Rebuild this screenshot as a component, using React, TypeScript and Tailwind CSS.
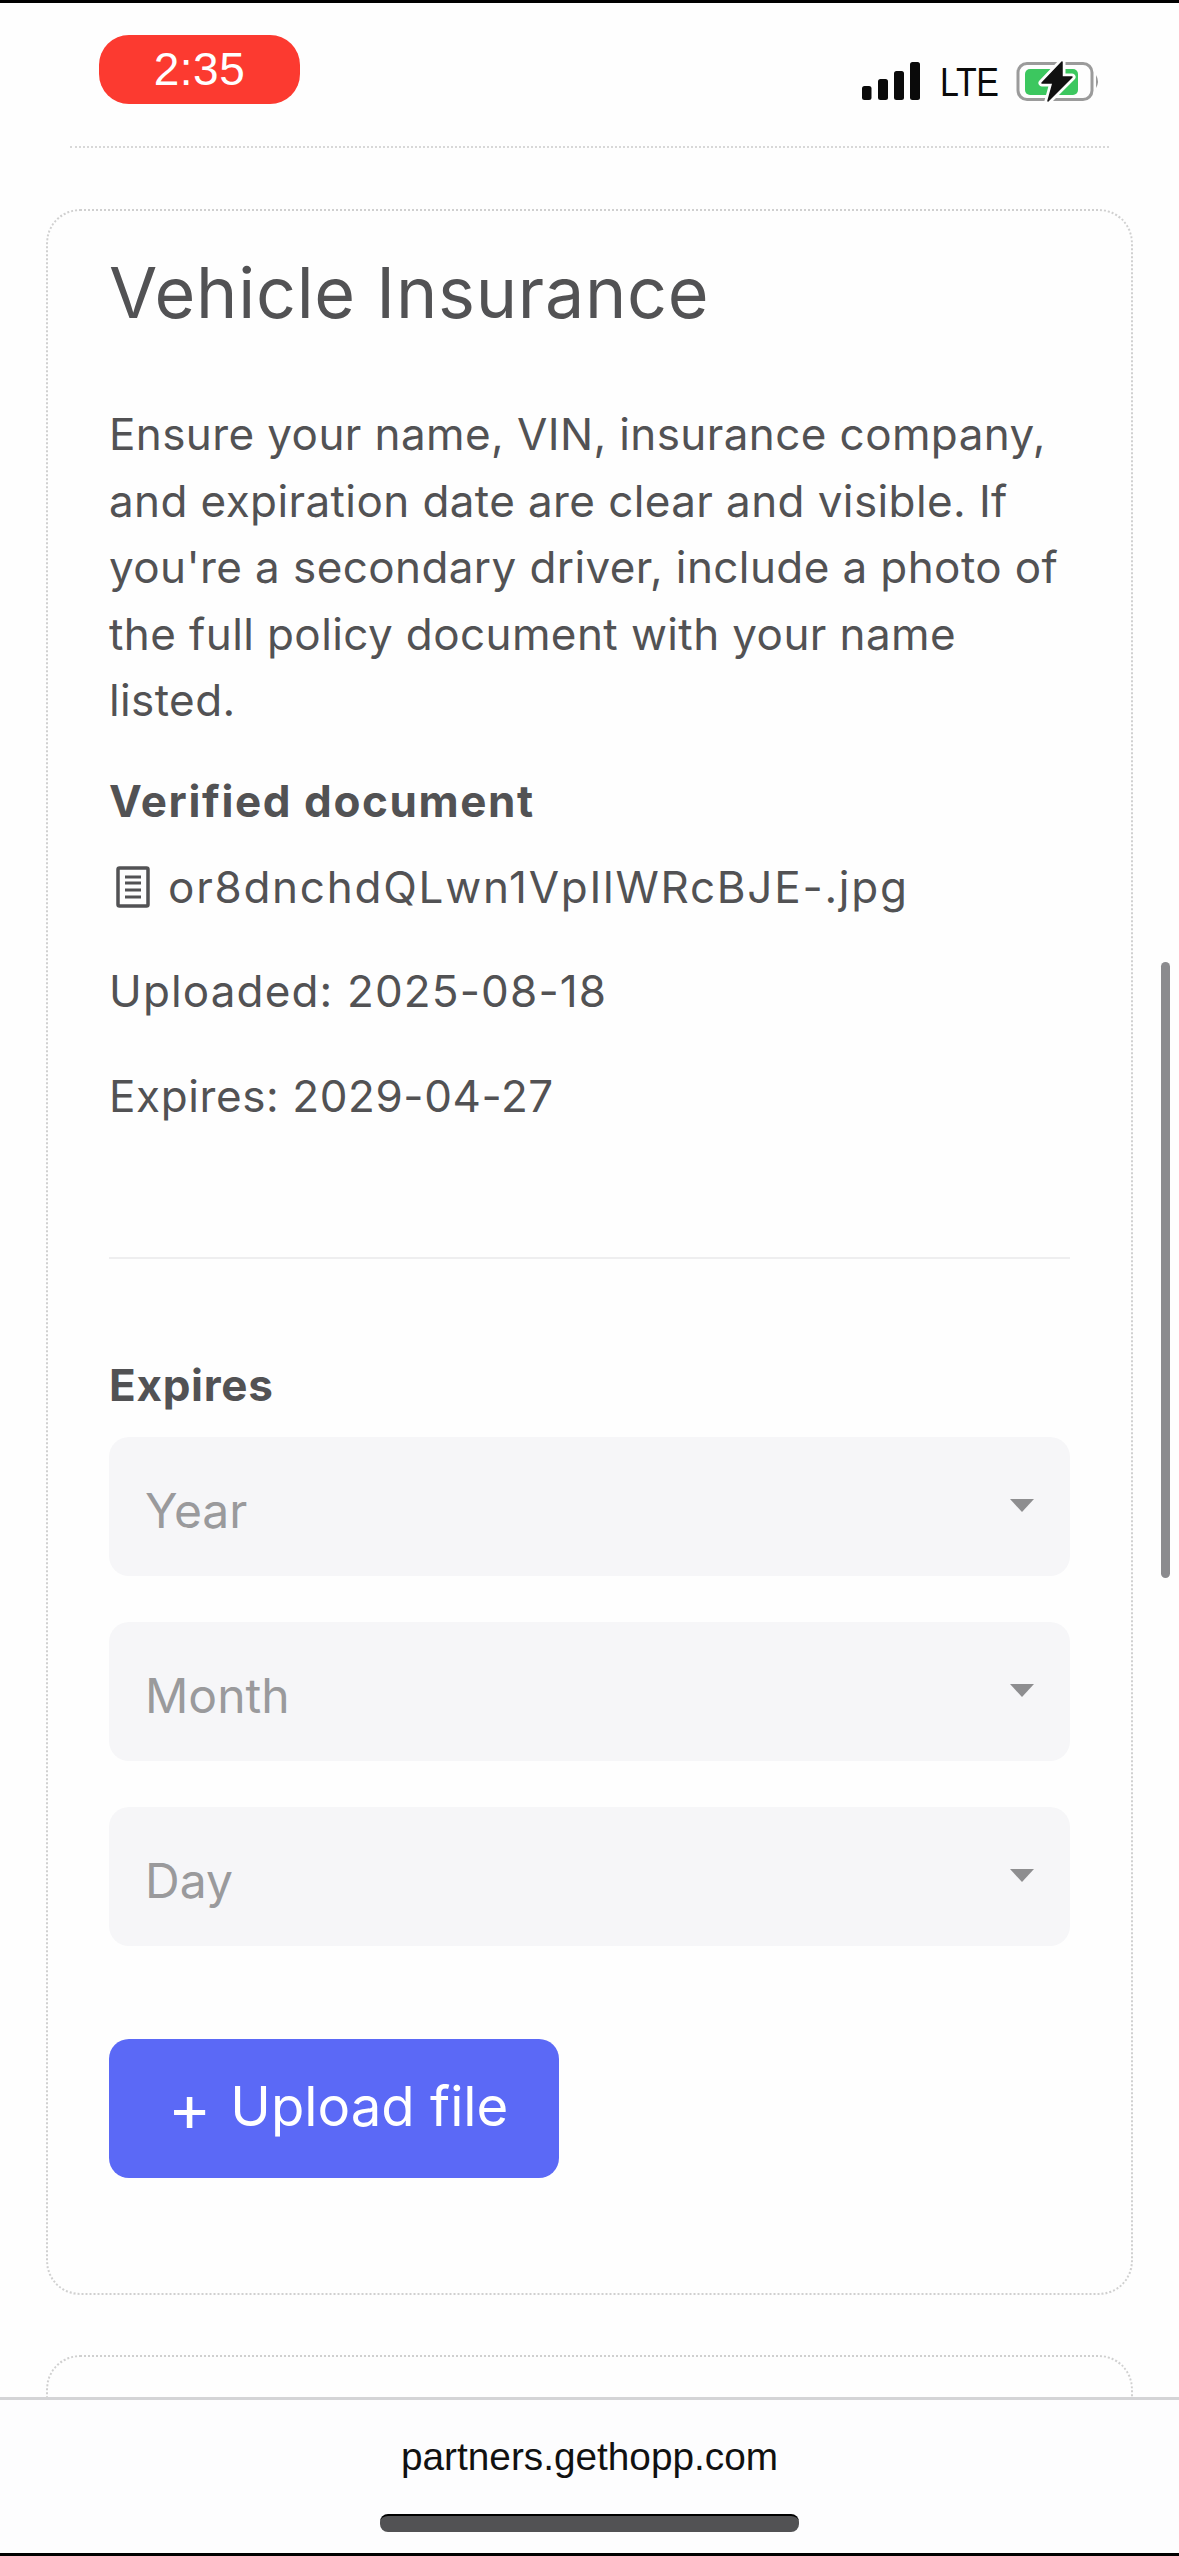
export default function App() {
  const body = "font-['Inter',sans-serif]";
  const selects = ["Year", "Month", "Day"];
  return (
    <div className={`relative flex h-[2556px] w-[1179px] flex-col overflow-hidden border-y-[3px] border-black bg-[#fefefe] ${body} text-[#525254]`}>
      {/* status bar */}
      <header className="flex h-[143px] shrink-0 items-start justify-between pl-[99px] pr-[79px]">
        <div className="mt-[32px] flex h-[69px] w-[201px] items-center justify-center rounded-[30px] bg-[#fc3a30] font-['Liberation_Sans',sans-serif] text-[46px] tracking-[0.5px] text-white">
          2:35
        </div>
        <div className="mt-[58px] flex items-center">
          <svg width="60" height="38" viewBox="0 0 60 38" className="mb-[3px] text-[#0a0a0a]" aria-hidden="true">
            <rect x="0" y="24" width="9.5" height="14" rx="2.5" fill="currentColor" />
            <rect x="16" y="17" width="10" height="21" rx="2.5" fill="currentColor" />
            <rect x="32" y="9" width="10" height="29" rx="2.5" fill="currentColor" />
            <rect x="48" y="0" width="10" height="38" rx="2.5" fill="currentColor" />
          </svg>
          <span className="ml-[18px] w-[60px] origin-center scale-y-[1.2] font-['Liberation_Sans',sans-serif] text-[34px] leading-[38px] tracking-[-0.5px] text-[#0a0a0a]">
            LTE
          </span>
          <svg width="84" height="42" viewBox="0 0 84 42" className="ml-[16px]" aria-hidden="true">
            <rect x="2" y="2.5" width="74" height="36" rx="9" fill="none" stroke="#9b9b9b" strokeWidth="3" />
            <rect x="9" y="8" width="53" height="26" rx="5" fill="#3cc75f" />
            <path d="M80 14 Q84 20.5 80 27 Z" fill="#9b9b9b" />
            <path d="M46 1 L26 22 L37 22 L32 40 L56 16 L46 16 Z" fill="#fefefe" stroke="#fefefe" strokeWidth="7" strokeLinejoin="round" />
            <path d="M46 1 L26 22 L37 22 L32 40 L56 16 L46 16 Z" fill="#111" stroke="#111" strokeWidth="1.5" strokeLinejoin="round" />
          </svg>
        </div>
      </header>
      <div className="mx-[70px] shrink-0 border-t-2 border-dotted border-[#d8d8d8]" />

      {/* scrolling content */}
      <main className="flex min-h-0 flex-1 flex-col gap-[60px] overflow-hidden px-[46px] pt-[61px]">
        <section className="h-[2086px] shrink-0 rounded-[34px] border-2 border-dotted border-[#d0d0d0] px-[61px] pt-[40px]">
          <h1 className="text-[70px] leading-[84px] font-normal tracking-[0.75px]">Vehicle Insurance</h1>
          <p className="mt-[66px] text-[44px] leading-[66.5px] tracking-[0.4px]">
            Ensure your name, VIN, insurance company, and expiration date are clear and visible. If you're a secondary driver, include a photo of the full policy document with your name listed.
          </p>
          <h2 className="mt-[34px] text-[44px] leading-[66px] font-bold tracking-[1.6px]">Verified document</h2>
          <div className="mt-[20px] flex h-[66px] items-center gap-[18px] text-[44px] tracking-[1.75px]">
            <svg width="34" height="42" viewBox="0 0 34 42" className="ml-[7px] shrink-0" aria-hidden="true">
              <rect x="2" y="2" width="30" height="38" rx="1.5" fill="none" stroke="#525254" strokeWidth="3.5" />
              <path d="M9 11 H25 M9 17 H25 M9 24 H25 M9 31 H25" stroke="#525254" strokeWidth="3" />
            </svg>
            <span>or8dnchdQLwn1VpIlWRcBJE-.jpg</span>
          </div>
          <p className="mt-[38px] text-[44px] leading-[66px] tracking-[1.15px]">Uploaded: 2025-08-18</p>
          <p className="mt-[39px] text-[44px] leading-[66px] tracking-[0.6px]">Expires: 2029-04-27</p>
          <hr className="mt-[128px] border-t-2 border-[#eeeeef]" />
          <h2 className="mt-[93px] text-[44px] leading-[66px] font-bold tracking-[0.7px]">Expires</h2>
          <div className="mt-[19px] flex flex-col gap-[46px]">
            {selects.map((s) => (
              <div key={s} className="relative flex h-[139px] items-center rounded-[20px] bg-[#f6f6f8] pl-[36px] pt-[10px] text-[48px] text-[#9a9a9c]">
                {s}
                <span className="absolute right-[36px] top-[62px] h-0 w-0 border-x-[12px] border-t-[13px] border-x-transparent border-t-[#8e8e90]" />
              </div>
            ))}
          </div>
          <button className="mt-[93px] flex h-[139px] w-[450px] items-center justify-center gap-[19px] rounded-[20px] bg-[#5b69f6] pb-[2px] pl-[8px] text-[54.5px] text-white">
            <span className="text-[66px] leading-none">+</span>
            <span>Upload file</span>
          </button>
        </section>
        <section className="h-[200px] shrink-0 rounded-[34px] border-2 border-dotted border-[#d0d0d0]" />
      </main>

      {/* browser bottom bar */}
      <footer className="relative flex h-[156px] shrink-0 flex-col items-center border-t-[3px] border-[#d4d4d6] bg-[#fdfdfe]">
        <div className="mt-[34px] font-['Liberation_Sans',sans-serif] text-[38.75px] leading-[46px] text-[#111]">partners.gethopp.com</div>
        <div className="mt-[34px] h-[18px] w-[419px] rounded-[8px] border-t-[2px] border-black bg-[#525254]" />
      </footer>

      {/* overlay scrollbar */}
      <div className="absolute left-[1161px] top-[959px] h-[616px] w-[9px] rounded-full bg-[#8b8b8e]" />
    </div>
  );
}
